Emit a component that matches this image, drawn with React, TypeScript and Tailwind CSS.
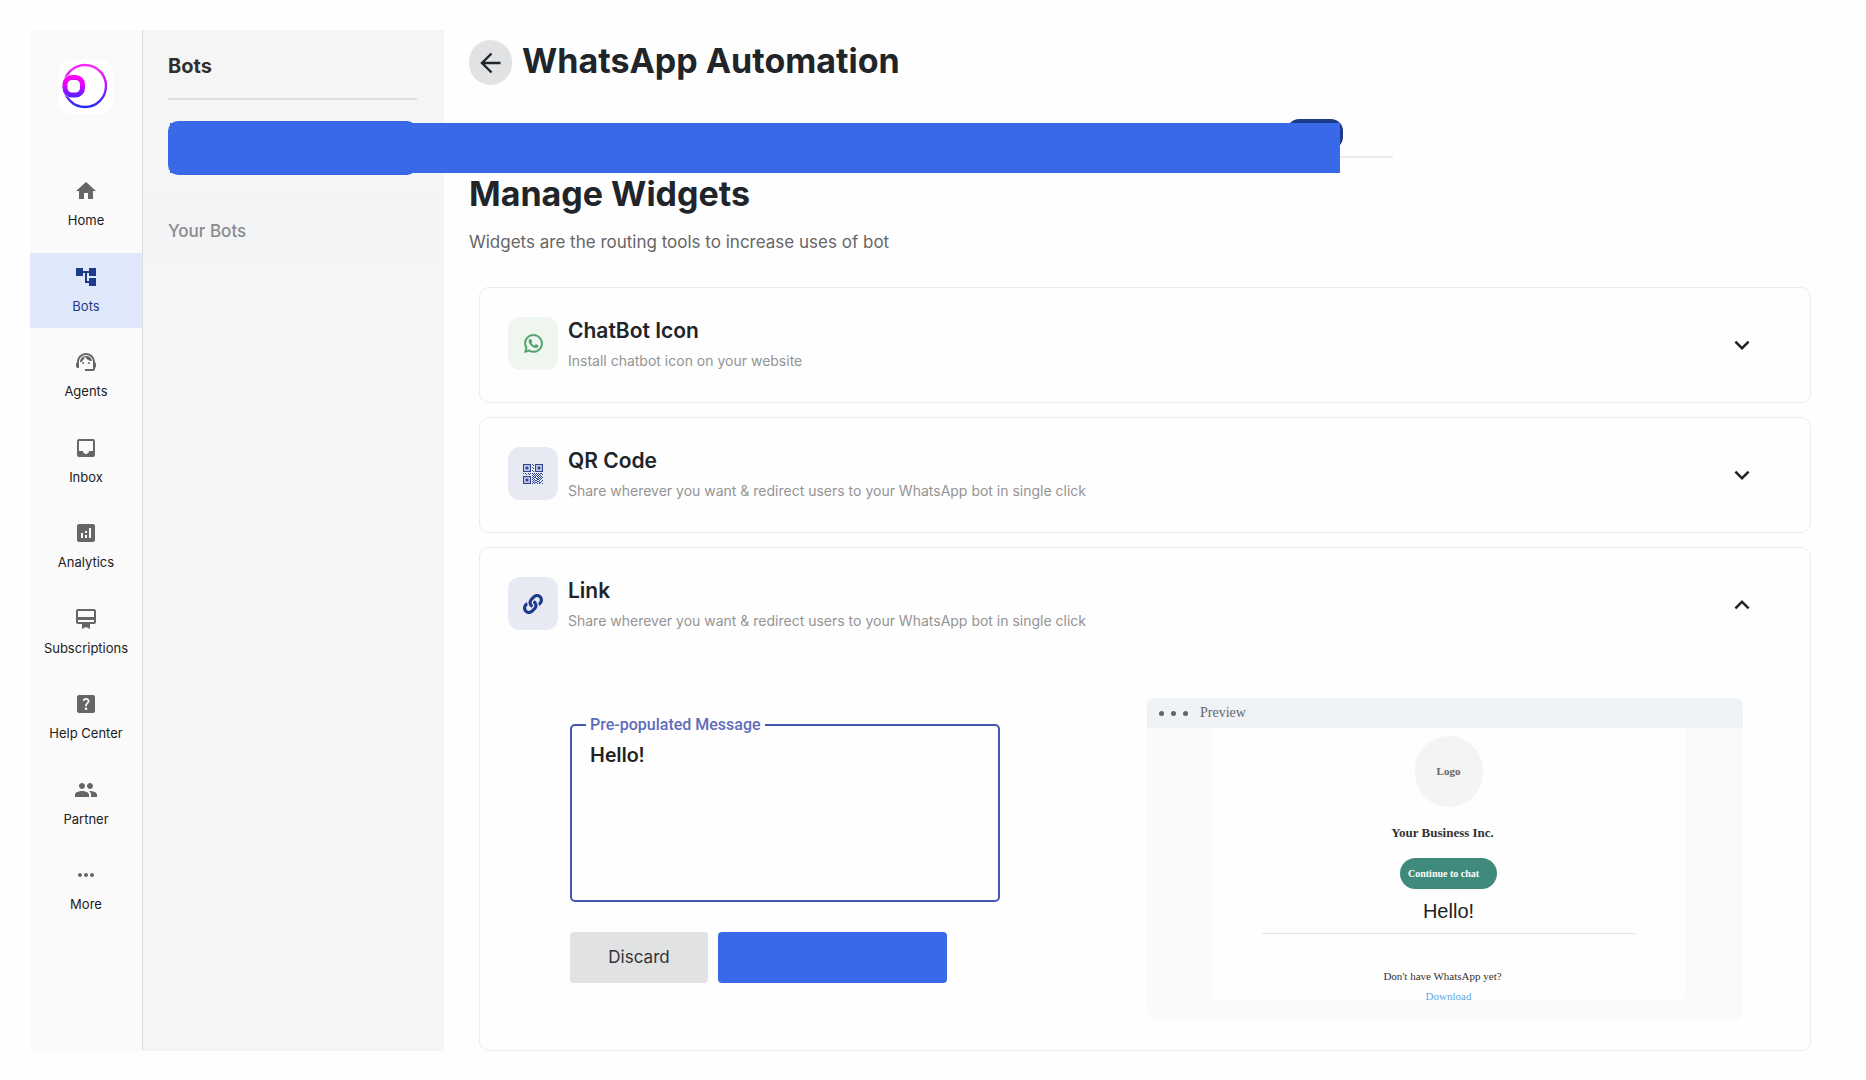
import React, { useState } from 'react';
import {
  MdAccountTree,
  MdAnalytics,
  MdCardMembership,
  MdExpandLess,
  MdExpandMore,
  MdGroup,
  MdHelpCenter,
  MdHome,
  MdInbox,
  MdMoreHoriz,
  MdSupportAgent,
} from 'react-icons/md';
import { FaLink, FaWhatsapp } from 'react-icons/fa';

const NAV_ITEMS = [
  { label: 'Home', icon: MdHome },
  { label: 'Bots', icon: MdAccountTree, active: true },
  { label: 'Agents', icon: MdSupportAgent },
  { label: 'Inbox', icon: MdInbox },
  { label: 'Analytics', icon: MdAnalytics },
  { label: 'Subscriptions', icon: MdCardMembership },
  { label: 'Help Center', icon: MdHelpCenter },
  { label: 'Partner', icon: MdGroup },
  { label: 'More', icon: MdMoreHoriz },
];

// Top left corners of the three finder squares
const QR_FINDERS = [
  [0, 0],
  [12, 0],
  [0, 12],
];

// Loose modules of the code as [x, y]
const QR_MODULES = [
  [9, 0], [10, 1], [9, 3], [10, 4], [9, 6], [10, 7],
  [0, 9], [2, 9], [3, 10], [5, 9], [7, 9], [6, 10], [9, 9],
  [11, 9], [13, 9], [15, 9], [17, 9], [18, 9],
  [10, 10], [12, 10], [14, 10], [16, 10], [19, 10],
  [9, 11], [11, 11], [13, 11], [15, 11], [17, 11],
  [10, 12], [12, 12], [14, 12], [16, 12], [18, 12],
  [9, 13], [11, 13], [12, 13], [15, 13], [17, 13], [19, 13],
  [10, 14], [13, 14], [14, 14], [16, 14], [18, 14],
  [9, 15], [11, 15], [14, 15], [15, 15], [17, 15],
  [10, 16], [12, 16], [13, 16], [16, 16], [19, 16],
  [9, 17], [11, 17], [14, 17], [15, 17], [18, 17],
  [10, 18], [12, 18], [13, 18], [16, 18], [17, 18],
  [9, 19], [11, 19], [14, 19], [16, 19], [19, 19],
];

const Logo: React.FC = () => (
  <svg width="54" height="54" viewBox="0 0 54 54" fill="none" aria-hidden="true">
    <defs>
      <linearGradient id="ring" x1="0" y1="4" x2="0" y2="49" gradientUnits="userSpaceOnUse">
        <stop offset="0" stopColor="#ff2bf6" />
        <stop offset="0.35" stopColor="#d21cf5" />
        <stop offset="1" stopColor="#1a2cff" />
      </linearGradient>
      <linearGradient id="dot" x1="0" y1="15" x2="0" y2="38" gradientUnits="userSpaceOnUse">
        <stop offset="0" stopColor="#ff00f5" />
        <stop offset="0.4" stopColor="#e800ff" />
        <stop offset="1" stopColor="#4422ff" />
      </linearGradient>
    </defs>
    <circle cx="26" cy="26" r="21" stroke="url(#ring)" strokeWidth="2.4" />
    <rect x="3" y="14.5" width="23.5" height="23.5" rx="10" fill="#fff" />
    <rect x="6" y="17.5" width="17.5" height="17.5" rx="7" stroke="url(#dot)" strokeWidth="5" />
  </svg>
);

const QrIcon: React.FC = () => (
  <svg width="20" height="20" viewBox="0 0 20 20" fill="#2f4592" aria-hidden="true">
    {QR_FINDERS.map(([x, y]) => (
      <g key={`${x}-${y}`}>
        <rect x={x + 0.6} y={y + 0.6} width="6.8" height="6.8" fill="none" stroke="#2f4592" strokeWidth="1.2" />
        <rect x={x + 2.5} y={y + 2.5} width="3" height="3" />
      </g>
    ))}
    {QR_MODULES.map(([x, y]) => (
      <rect key={`${x}-${y}`} x={x} y={y} width="1" height="1" />
    ))}
  </svg>
);

interface WidgetCardProps {
  title: string;
  desc: string;
  icon: React.ReactNode;
  tile: string;
  open?: boolean;
  children?: React.ReactNode;
}

const WidgetCard: React.FC<WidgetCardProps> = ({ title, desc, icon, tile, open, children }) => (
  <section className="rounded-[10px] border border-[#ececec]">
    <button
      type="button"
      aria-expanded={!!open}
      className="flex h-[114px] w-full items-center justify-between pr-[53px] pl-7 text-left"
    >
      <span className="flex items-start gap-2.5">
        <span className={`flex h-[53px] w-[50px] items-center justify-center rounded-xl ${tile}`}>{icon}</span>
        <span className="flex flex-col gap-1">
          <span className="text-[21px] leading-7 font-semibold text-[#212529]">{title}</span>
          <span className="text-sm leading-6 text-[#949494]">{desc}</span>
        </span>
      </span>
      {open ? <MdExpandLess size={30} color="#212121" /> : <MdExpandMore size={30} color="#212121" />}
    </button>
    {children}
  </section>
);

const Preview: React.FC<{ message: string }> = ({ message }) => (
  <div className="w-[596px] overflow-hidden rounded-lg bg-[#fafafa] pb-5 font-['Liberation_Serif',serif]">
    <div className="flex h-[30px] items-center gap-3 bg-[#eff3f6] pl-3 text-[#666]">
      <div className="flex gap-[7px]">
        {[0, 1, 2].map((n) => (
          <span key={n} className="h-[5px] w-[5px] rounded-full bg-[#666]" />
        ))}
      </div>
      <span className="text-sm leading-5">Preview</span>
    </div>
    <div className="mr-[58px] ml-[65px] flex h-[272px] flex-col items-center rounded-b-md bg-[#fefefe] pt-2">
      <div className="flex h-[71px] w-[68px] shrink-0 items-center justify-center rounded-full bg-[#f4f4f4] text-[11px] font-bold text-[#666]">
        Logo
      </div>
      <h3 className="mt-4 pr-3 text-[13px] leading-5 font-bold text-[#333]">Your Business Inc.</h3>
      <button
        type="button"
        className="mt-[15px] h-[31px] w-[97px] shrink-0 rounded-full bg-[#3f8a7c] pl-2 text-left text-[10px] font-bold text-white"
      >
        Continue to chat
      </button>
      <p className="mt-2 font-['Liberation_Sans',sans-serif] text-xl leading-7 text-[#212121]">{message}</p>
      <hr className="mt-2 w-[79%] border-[#e3e4e5]" />
      <p className="mt-8 pr-3 text-[11px] leading-5 text-[#333]">Don't have WhatsApp yet?</p>
      <a href="#download" className="text-[11px] leading-5 text-[#5aa9e6]">
        Download
      </a>
    </div>
  </div>
);

const App: React.FC = () => {
  const [message, setMessage] = useState('Hello!');

  return (
    <div className="flex bg-[#fefefe] py-[30px] pr-[55px] pl-[30px] font-['Inter',sans-serif]">
      {/* Sidebar */}
      <aside className="flex w-[113px] shrink-0 flex-col items-center border-r border-[#dedede] bg-[#fafafa] pt-[30px]">
        <div className="rounded-xl bg-white">
          <Logo />
        </div>
        <nav className="mt-[53px] flex h-[759px] w-full flex-col justify-between">
          {NAV_ITEMS.map(({ label, icon: Icon, active }) => (
            <a
              key={label}
              href={`#${label}`}
              className={`flex h-[75px] flex-col items-center gap-2 pt-3 text-[13px] leading-[18px] ${
                active ? 'bg-[#e0e8fc] text-[#1e3a8a]' : 'text-[#212121]'
              }`}
            >
              <Icon size={24} color={active ? '#1e3a8a' : '#666666'} />
              {label}
            </a>
          ))}
        </nav>
      </aside>

      {/* Bots panel */}
      <div className="relative w-[301px] shrink-0 bg-[#f5f5f5]">
        <h2 className="mr-[27px] ml-[25px] border-b-2 border-[#dedede] pt-[22px] pb-[18px] text-xl leading-7 font-bold text-[#2f2f2f]">
          Bots
        </h2>
        <button
          type="button"
          aria-label="Create bot"
          className="mx-[25px] mt-[21px] block h-[54px] w-[249px] rounded-[10px] bg-[#3969e8]"
        />
        <div className="mt-[21px] bg-[#f3f4f6] pt-[23px] pb-4 pl-[25px] text-[17px] leading-6 font-medium text-[#8a8b8c]">
          Your Bots
        </div>
        {/* Banner laid over the panel and the tab strip */}
        <div className="absolute top-[93px] left-[27px] z-10 h-[50px] w-[1170px] bg-[#3969e8]" />
      </div>

      <main className="min-w-0 flex-1 pt-2.5 pl-[25px]">
        <header className="flex items-start gap-2.5">
          <button
            type="button"
            aria-label="Back"
            className="flex h-[45px] w-[43px] items-center justify-center rounded-full bg-[#e1e2e4]"
          >
            <svg width="24" height="24" viewBox="0 0 24 24" fill="none" stroke="#212529" strokeWidth="2.4">
              <path d="M21.5 12H3.5M12.5 2.5 3 12l9.5 9.5" />
            </svg>
          </button>
          <h1 className="text-[34px] leading-[42px] font-bold text-[#212529]">WhatsApp Automation</h1>
        </header>

        {/* Tab strip */}
        <div className="flex h-[73px] w-[924px] justify-end border-b-2 border-[#ebebeb] pt-[34px] pr-[50px]">
          <span className="h-[30px] w-[56px] rounded-xl bg-[#1e3a8a]" />
        </div>

        <h2 className="mt-[14px] text-[34px] leading-[44px] font-bold text-[#212529]">Manage Widgets</h2>
        <p className="mt-3 text-[17px] leading-7 text-[#666]">Widgets are the routing tools to increase uses of bot</p>

        <div className="mt-[31px] ml-2.5 flex flex-col gap-3.5">
          <WidgetCard
            title="ChatBot Icon"
            desc="Install chatbot icon on your website"
            tile="bg-[#eef6ef]"
            icon={<FaWhatsapp size={21} color="#4c9f68" stroke="#4c9f68" strokeWidth={10} />}
          />
          <WidgetCard
            title="QR Code"
            desc="Share wherever you want & redirect users to your WhatsApp bot in single click"
            tile="bg-[#e8eaf3]"
            icon={<QrIcon />}
          />
          <WidgetCard
            title="Link"
            desc="Share wherever you want & redirect users to your WhatsApp bot in single click"
            tile="bg-[#e8eaf3]"
            icon={<FaLink size={20} color="#1e3a8a" />}
            open
          >
            <div className="flex justify-between gap-10 pt-[36px] pr-[67px] pb-[30px] pl-[90px]">
              <div className="w-[430px] pt-[15px]">
                <fieldset className="h-[189px] rounded-[5px] border-2 border-[#4656ac] px-[18px]">
                  <legend className="-ml-1 px-1 font-['Roboto',sans-serif] text-base leading-6 font-medium text-[#5f6bbb]">
                    <label htmlFor="message">Pre-populated Message</label>
                  </legend>
                  <textarea
                    id="message"
                    value={message}
                    onChange={(e) => setMessage(e.target.value)}
                    className="block h-[150px] w-full resize-none bg-transparent font-['Roboto',sans-serif] text-[21px] leading-9 font-medium text-[#212121] outline-none"
                  />
                </fieldset>
                <div className="mt-[30px] flex gap-2.5">
                  <button
                    type="button"
                    onClick={() => setMessage('')}
                    className="h-[51px] w-[138px] rounded bg-[#e1e2e4] text-[17px] text-[#333]"
                  >
                    Discard
                  </button>
                  <button type="button" aria-label="Save message" className="h-[51px] w-[229px] rounded bg-[#3969e8]" />
                </div>
              </div>
              <Preview message={message} />
            </div>
          </WidgetCard>
        </div>
      </main>
    </div>
  );
};

export default App;
